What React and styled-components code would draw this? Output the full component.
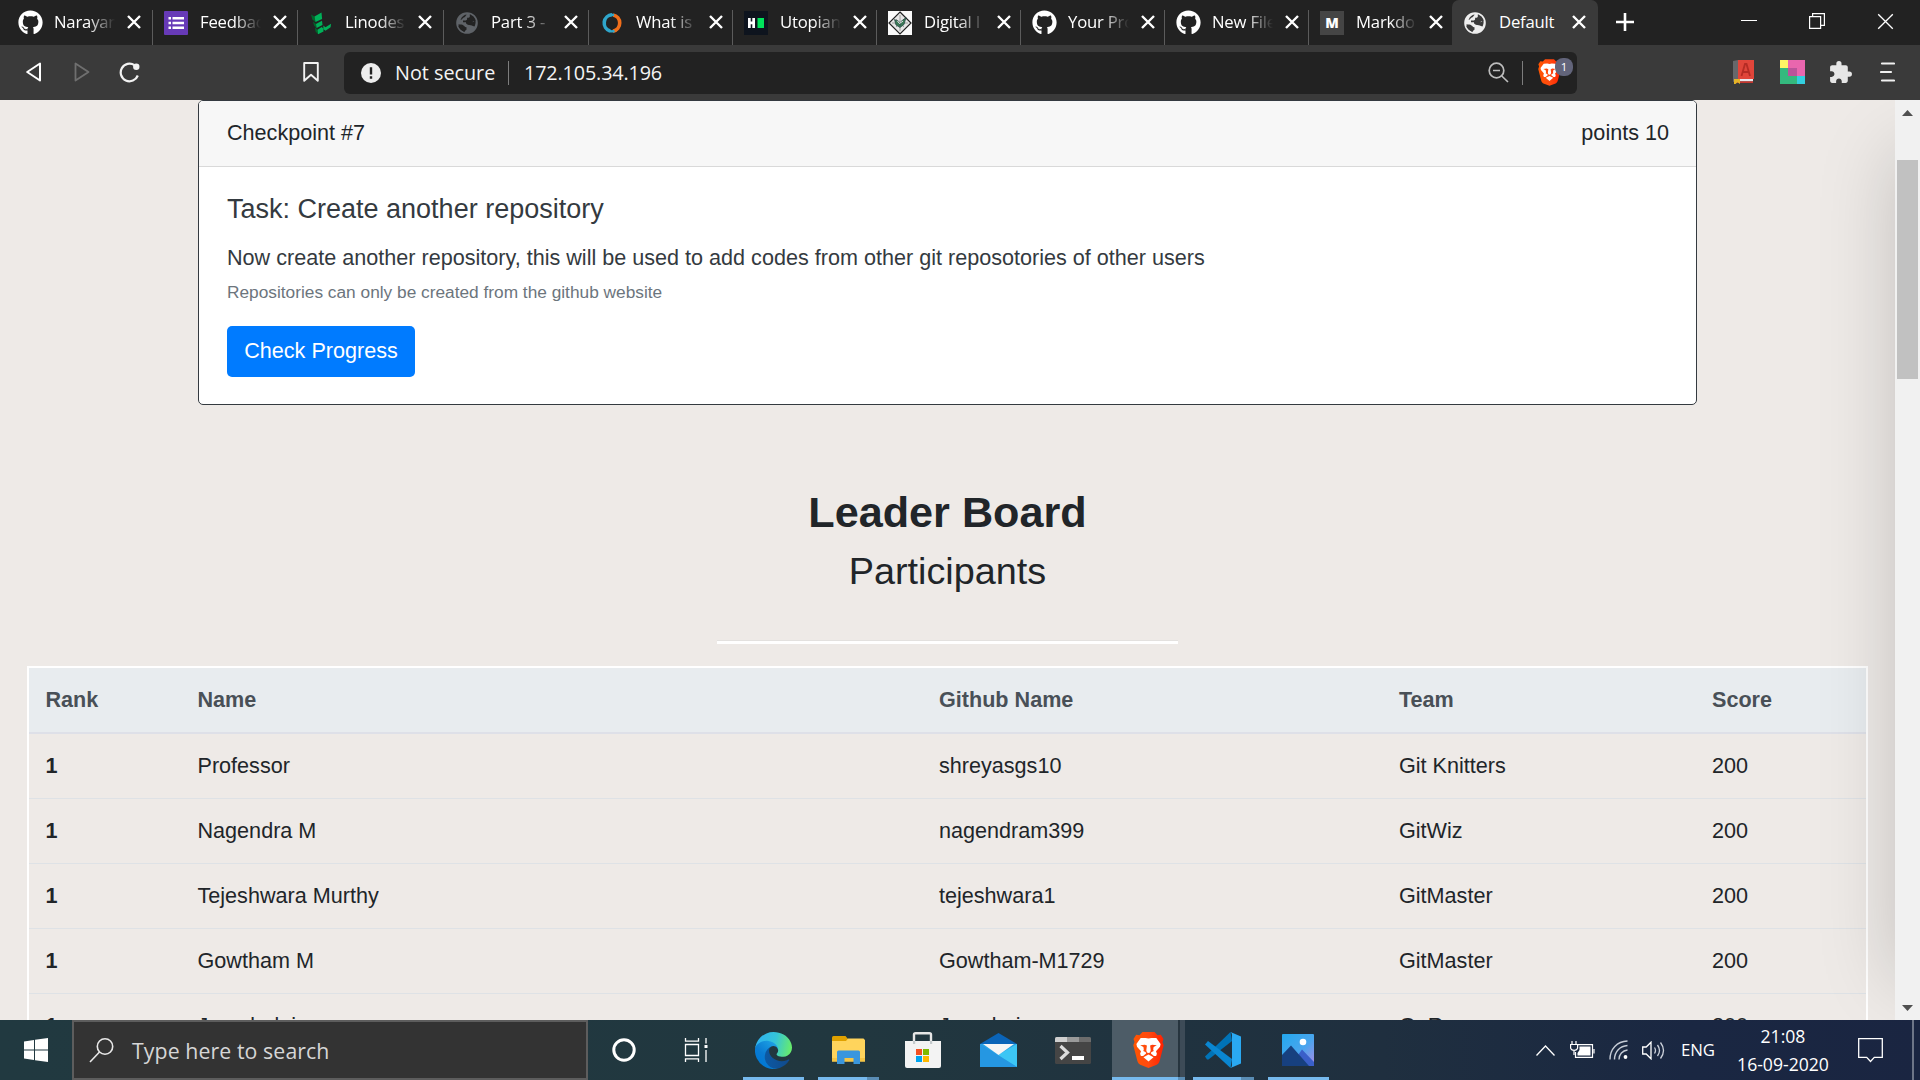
import React from "react";
import styled, { createGlobalStyle, css } from "styled-components";
import { FaGithub } from "react-icons/fa";
import { MdExtension } from "react-icons/md";

const ui = '"Open Sans", "Noto Sans", sans-serif';
const body = '"Liberation Sans", Arial, sans-serif';

const Global = createGlobalStyle`
  html, body { margin: 0; padding: 0; overflow: hidden; background: #222; }
  *, *::before, *::after { box-sizing: border-box; }
  svg { display: block; flex: none; }
`;

const Desktop = styled.div`
  display: flex;
  flex-direction: column;
  width: 1920px;
  height: 1080px;
  overflow: hidden;
  font-family: ${ui};
`;

/* ---------- tab strip ---------- */
const TabStrip = styled.div`
  display: flex;
  height: 45px;
  padding-left: 7px;
  background: #222222;
  flex: none;
`;

const Tab = styled.div`
  display: flex;
  align-items: center;
  width: ${(p) => p.$w}px;
  height: 45px;
  padding-left: 11px;
  flex: none;
  border-radius: 7px 7px 0 0;
  background: ${(p) => (p.$active ? "#3a3a3a" : "transparent")};
  ${(p) =>
    p.$line &&
    css`
      border-radius: 0;
      background: linear-gradient(#5c5c5c, #5c5c5c) right 0 bottom 0 / 1px 35px no-repeat;
    `}
`;

const Favicon = styled.div`
  display: flex;
  align-items: center;
  justify-content: center;
  width: 24px;
  height: 24px;
  flex: none;
  color: #fff;
`;

const TabTitle = styled.span`
  width: 61px;
  margin-left: 12px;
  padding-bottom: 2px;
  overflow: hidden;
  white-space: nowrap;
  font-size: 16.7px;
  line-height: 26px;
  letter-spacing: -0.2px;
  color: #fff;
  flex: none;
  ${(p) =>
    !p.$full &&
    css`
      mask-image: linear-gradient(90deg, #000 56%, transparent 100%);
    `}
`;

const TabClose = styled.div`
  display: flex;
  width: 14px;
  margin: 0 0 1px 12px;
`;

const NewTab = styled.div`
  display: flex;
  align-items: center;
  justify-content: center;
  width: 53px;
  height: 44px;
`;

const WindowButtons = styled.div`
  display: flex;
  margin-left: auto;
  padding-right: 1px;
  height: 42px;
`;

const WindowButton = styled.div`
  display: flex;
  align-items: center;
  justify-content: center;
  width: 68px;
`;

/* ---------- toolbar ---------- */
const Toolbar = styled.div`
  display: flex;
  align-items: center;
  height: 55px;
  background: #3a3a3a;
  flex: none;
`;

const NavIcons = styled.div`
  display: flex;
  align-items: center;
  width: 344px;
  padding: 0 0 1px 26px;
`;

const NavGap = styled.div`
  width: ${(p) => p.$w}px;
`;

const AddressBar = styled.div`
  display: flex;
  align-items: center;
  width: 1233px;
  height: 42px;
  padding: 0 3px 0 17px;
  border-radius: 6px;
  background: #222222;
  color: #f4f4f4;
  font-size: 19.8px;
  line-height: 28px;
  white-space: nowrap;
`;

const Security = styled.span`
  width: 101px;
  margin-left: 14px;
`;

const Address = styled.span`
  width: 138px;
  margin-right: auto;
  letter-spacing: -0.14px;
`;

const BarDivider = styled.span`
  width: 1px;
  height: 24px;
  margin: 0 ${(p) => p.$r}px 0 ${(p) => p.$l}px;
  background: #7d7d7d;
`;

const Shield = styled.div`
  position: relative;
  display: flex;
  width: 36px;
  height: 30px;
  align-items: center;
`;

const ShieldCount = styled.span`
  position: absolute;
  left: 17px;
  top: 0;
  width: 18px;
  height: 18px;
  border-radius: 8px;
  background: #62647a;
  color: #fff;
  font-size: 11.5px;
  line-height: 18px;
  text-align: center;
`;

const Extensions = styled.div`
  display: flex;
  align-items: center;
  margin-left: auto;
  padding: 0 25px 1px 0;
`;

/* ---------- web page ---------- */
const Viewport = styled.div`
  display: flex;
  height: 920px;
  overflow: hidden;
  flex: none;
`;

const Page = styled.main`
  position: relative;
  width: 1895px;
  height: 920px;
  overflow: hidden;
  background: #eeeae7;
  color: #212529;
  font-family: ${body};
  font-size: 21.6px;
  line-height: 33px;
`;

const EdgeShadow = styled.div`
  position: absolute;
  left: 1895px;
  top: 50px;
  width: 300px;
  height: 830px;
  box-shadow: 0 0 72px rgba(0, 0, 0, 0.18);
`;

const Card = styled.section`
  width: 1499px;
  height: 305px;
  margin-left: 198px;
  border: 1px solid #343a40;
  border-radius: 5px;
  background: #fff;
  overflow: hidden;
`;

const CardHeader = styled.header`
  display: flex;
  justify-content: space-between;
  height: 66px;
  padding: 15px 27px 0 28px;
  background: #f7f7f7;
  border-bottom: 1px solid #d9d9d9;
`;

const CardBody = styled.div`
  padding: 26px 28px 0;
  color: #343a40;
`;

const TaskTitle = styled.h5`
  margin: 0 0 15px;
  font-size: 27px;
  font-weight: 400;
  line-height: 33px;
`;

const TaskText = styled.p`
  margin: 0 0 5px;
`;

const TaskNote = styled.p`
  margin: 0 0 21px;
  font-size: 17.3px;
  line-height: 26px;
  color: #6c757d;
`;

const PrimaryButton = styled.button`
  display: block;
  width: 188px;
  height: 51px;
  padding: 0 0 1px;
  border: 0;
  border-radius: 5px;
  background: #007bff;
  color: #fff;
  font: 21.6px ${body};
  white-space: nowrap;
`;

const BoardTitle = styled.h2`
  margin: 81px 0 9px;
  font-size: 43.2px;
  line-height: 53px;
  text-align: center;
`;

const BoardSubtitle = styled.h3`
  margin: 0;
  font-size: 37.8px;
  font-weight: 400;
  line-height: 46px;
  text-align: center;
`;

const Rule = styled.hr`
  width: 461px;
  height: 4px;
  margin: 46px auto 22px;
  border: 0;
  border-top: 1px solid #e3e1df;
  background: #fff;
`;

const Board = styled.div`
  width: 1841px;
  margin-left: 27px;
  border: 2px solid #fff;
`;

const BoardRow = styled.div`
  display: grid;
  grid-template-columns: 152px 741.5px 460px 313px 1fr;
  align-items: center;
  height: 65px;
  padding: 0 0 2px 16.5px;
  border-bottom: 1px solid #dee2e6;
`;

const BoardHead = styled(BoardRow)`
  height: 66px;
  margin: 0 -2px;
  padding-bottom: 4px;
  border-left: 2px solid #fff;
  border-right: 2px solid #fff;
  border-bottom: 0;
  background: linear-gradient(#dee0e8, #dee0e8) left bottom / 100% 2px no-repeat border-box, #e8ecef;
  color: #495057;
  font-weight: 700;
`;

const Rank = styled.b`
  font-weight: 700;
`;

const Scrollbar = styled.div`
  display: flex;
  flex-direction: column;
  align-items: center;
  width: 25px;
  height: 920px;
  padding: 10px 0 9px;
  background: #f1f1f1;
`;

const Thumb = styled.div`
  width: 21px;
  height: 219px;
  margin: 44px 0 auto;
  background: #c1c1c1;
`;

/* ---------- taskbar ---------- */
const Taskbar = styled.footer`
  display: flex;
  height: 60px;
  background: linear-gradient(90deg, #213940 0%, #21373f 45%, #1f2f3f 72%, #1a2742 88%, #1a2541 100%);
  flex: none;
`;

const StartButton = styled.div`
  display: flex;
  align-items: center;
  justify-content: center;
  width: 72px;
`;

const SearchBox = styled.div`
  display: flex;
  align-items: center;
  width: 516px;
  padding-left: 15px;
  gap: 18px;
  border: 2px solid #5d5d5d;
  background: #333333;
  color: #d6d6d6;
  font-size: 21.3px;
  line-height: 30px;
`;

const SearchHint = styled.span`
  padding-top: 2px;
  letter-spacing: 0.08px;
`;

const TaskItem = styled.div`
  display: flex;
  align-items: center;
  justify-content: center;
  position: relative;
  width: ${(p) => p.$w || 75}px;
  padding-right: ${(p) => p.$shift || 0}px;
  flex: none;
`;

const RunMark = styled.span`
  position: absolute;
  bottom: 0;
  left: ${(p) => p.$x}px;
  width: ${(p) => p.$w}px;
  height: 3px;
  background: ${(p) => (p.$dim ? "#5a8db5" : "#76b9ed")};
`;

const ActiveItem = styled(TaskItem)`
  background: linear-gradient(90deg, #4d5c67 66px, #27353f 66px, #27353f 68px, #3d4b57 68px);
`;

const Tray = styled.div`
  display: flex;
  align-items: center;
  margin-left: auto;
  color: #fff;
  font-size: 16.8px;
  line-height: 22px;
`;

const TrayCell = styled.div`
  display: flex;
  justify-content: center;
  width: ${(p) => p.$w}px;
  padding-right: ${(p) => p.$shift || 0}px;
  letter-spacing: -0.1px;
`;

const Clock = styled.div`
  display: flex;
  flex-direction: column;
  align-items: center;
  width: 116px;
  font-size: 17.6px;
  line-height: 28px;
`;

const PeekEdge = styled.div`
  width: 8px;
  height: 60px;
  border-left: 2px solid #6d7587;
`;

/* ---------- drawings ---------- */
const Cross = ({ size = 14, w = 2.4 }) => (
  <svg width={size} height={size} viewBox="0 0 14 14" stroke="#fff" strokeWidth={w}>
    <path d="M1 1 13 13M13 1 1 13" />
  </svg>
);

const Globe = ({ color, gap }) => (
  <svg width="24" height="24" viewBox="0 0 24 24">
    <circle cx="12" cy="12" r="10" fill="none" stroke={color} strokeWidth="1.6" />
    <path
      fill={color}
      d="M12 2c-5.500 0-10 4.500-10 10 0 1 .2 2 .4 2.800H7c1 0 1.500.5 1.500 1.500h2V19H9l.5 2.800c.8.2 1.600.2 2.500.2 5.500 0 10-4.500 10-10 0-.7 0-1.300-.2-2h-2.600c-1 0-1.700.8-1.700 1.800 0 .9-.7 1.400-1.500 1.400h-2.800c-1.300 0-2.200-1-2.200-2H8V9.500h2.800c.8 0 1.300-.6 1.300-1.400V6.800h1.500c.7 0 1.200-.6 1.200-1.200V2.400C14 2.100 13 2 12 2z"
    />
    <path
      fill={gap}
      d="M3.500 13.300c2 .2 3.700.2 5 1.200 1.200.8 1.500 1.800 3 1.800v2.400c-.8.400-1.500 1-1.600 2.100C6.300 20 3.600 17 3.500 13.300zM11 9.800h3c1.500 0 1.800 1.400 3.200 1.400 1.500 0 1.500-1.400 3.300-1.400.4 2-.2 4.400-1 5.700-2.500-.4-3-1.500-5.200-1.500-2 0-3.600-1.200-3.300-4.200zM13 3.500c-2.500 0-2 2.500-4.200 3-1.400.4-1.300 2-3.300 2.400C7 5.200 9.500 3.200 13 3.500z"
    />
  </svg>
);

const Forms = () => (
  <svg width="24" height="24" viewBox="0 0 24 24">
    <rect width="24" height="24" rx="1" fill="#673ab7" />
    <path fill="#fff" d="M4.500 6h2.500v2.600H4.500zM8.500 6H20v2.600H8.500zM4.500 10.700h2.500v2.600H4.500zM8.500 10.700H20v2.600H8.500zM4.500 15.400h2.500V18H4.500zM8.500 15.400H20V18H8.500z" />
  </svg>
);

const Linode = () => (
  <svg width="24" height="24" viewBox="0 0 24 24">
    <path fill="#00662a" d="M2 3.500 5.500 5.500 6.500 11 3.300 8.500zM4 10.500l3 2.500.6 4L5 14.500zM6 16.500l2.500 2.200.6 4.600L6.500 20.500z" />
    <path fill="#00b159" d="m5.500 5.500 7-4 .6 6.500L6.500 11zM7 13l6-3.200.5 4.200-5.900 3zM8.500 18.700l4.200-2.600 1.600 1.500.2 2.800-5.400 2.900zM14.300 14.500l2.200 1.800v3.400l-2-1.500zM16.500 16.300l5.500-3.600-.4 3.600-5.100 3.400z" />
  </svg>
);

const Ring = () => (
  <svg width="24" height="24" viewBox="0 0 24 24" fill="none" strokeWidth="3.600">
    <path stroke="#2fa6cb" d="M12 3.800a8.300 8.300 0 0 0-2 16.200" />
    <path stroke="#f26f1b" d="M13 3.900A8.300 8.300 0 0 1 13 20.200" />
    <path stroke="#2fa6cb" d="M8.500 19.400c2 1.200 4.200 1.200 6 .4M9 4.500c1.500-.8 3.500-.8 5-.3" strokeWidth="2.400" />
  </svg>
);

const HashTile = () => (
  <svg width="24" height="24" viewBox="0 0 24 24">
    <rect width="24" height="24" fill="#0e141e" />
    <path fill="#fff" d="M4 7h2.700v3.600h1.600V7H11v10H8.300v-3.800H6.700V17H4z" />
    <rect x="13.500" y="7" width="6.500" height="10" fill="#00e35b" />
  </svg>
);

const Diamond = () => (
  <svg width="24" height="24" viewBox="0 0 24 24">
    <rect width="24" height="24" fill="#fafafa" />
    <path d="M12 1 23 12 12 23 1 12z" fill="#e6e6e6" stroke="#222" strokeWidth="1.200" />
    <path d="M12 4v16M4 12h16M8 8l8 8M16 8l-8 8" stroke="#8d8d8d" strokeWidth=".8" />
    <path d="M6.500 8.500 11 10.500l1 4 1-4 5-4-2 7-4 3-4-2.500z" fill="#3c7a57" stroke="#244" strokeWidth=".7" />
    <path d="m9.500 10 2 2.500L15 10" stroke="#eee" fill="none" />
  </svg>
);

const MarkBadge = styled.div`
  width: 24px;
  height: 24px;
  background: #454545;
  color: #fff;
  font: 800 14px/24px "Open Sans", sans-serif;
  text-align: center;
`;

const BraveLion = ({ w, h }) => (
  <svg width={w} height={h} viewBox="0 0 31 36">
    <defs>
      <linearGradient id="lionFill" x1="0" x2="1">
        <stop offset="0" stopColor="#ff5500" />
        <stop offset=".5" stopColor="#ff4a10" />
        <stop offset="1" stopColor="#ff2000" />
      </linearGradient>
    </defs>
    <path fill="url(#lionFill)" d="M9.500 0h12l3 3.300 3.300-.5L30.500 7l-1 3 1.200 3.200-4 15.500c-.5 2-1.500 3-3 4L15.500 36l-8.200-3.300c-1.500-1-2.500-2-3-4L.3 13.200 1.500 10l-1-3 2.700-4.200 3.300.5z" />
    <path
      fill="#fff"
      d="m15.500 6.600 3-.7 4.800.2 4.300 6-.6 2.600-4 4.600.9 2.500-.8 2.200-2.200.1-3-2.500.3-1.300 2.500-1.400-.5-1.400.4-2.400 3.200-1.900-4.600-.5-2.100.9.600 4.600-.6 2.200-1.600.6-1.600-.6-.6-2.200.6-4.600-2.100-.9-4.600.5 3.200 1.900.4 2.400-.5 1.400 2.500 1.400.3 1.300-3 2.500-2.200-.1-.8-2.200.9-2.500-4-4.600-.6-2.600 4.300-6 4.800-.2z"
    />
    <path fill="#fff" d="m15.500 22.600 5 2.600-5 4.400-5-4.400z" />
  </svg>
);

const Book = () => (
  <svg width="21" height="24" viewBox="0 0 21 24">
    <path d="M5 0h16v19H5z" fill="#e0453a" />
    <path d="M0 1 5 0v20L0 22z" fill="#66686b" />
    <path d="M4 19h16v2.500H4z" fill="#e9e9ef" />
    <path d="M4 21.300h16V23H4z" fill="#c5362e" />
    <path d="m8.500 16 3.500-12h1.500L17 16M10 12h6" fill="none" stroke="#b52c25" strokeWidth="1.800" />
    <path d="M1 19h6v5l-2.500-1.800L2.500 24H1z" fill="#e4b428" />
  </svg>
);

const Swatches = () => (
  <svg width="25" height="24" viewBox="0 0 25 24">
    <path fill="#fff566" d="M0 0h8v8H0z" />
    <path fill="#e966ae" d="M8 0h17v16H8z" />
    <path fill="#34b97e" d="M0 8h8v8h9v8H0z" />
    <path fill="#bb539a" d="M8 8h9v8H8z" />
    <path fill="#33cfdf" d="M17 16h8v8h-8z" />
  </svg>
);

const Arrow = ({ up }) => (
  <svg width="11" height="6" viewBox="0 0 11 6">
    <path fill="#505050" d={up ? "M5.500 0 11 6H0z" : "M5.500 6 11 0H0z"} />
  </svg>
);

const WindowsLogo = () => (
  <svg width="24" height="24" viewBox="0 0 24 24" fill="#fff">
    <path d="M0 3.400 10 2v9.500H0zM11 1.800 24 0v11.500H11zM0 12.500h10V22L0 20.600zM11 12.500h13V24l-13-1.800z" />
  </svg>
);

const SearchGlass = () => (
  <svg width="25" height="25" viewBox="0 0 25 25" fill="none" stroke="#e8e8e8" strokeWidth="1.600">
    <circle cx="16" cy="8.500" r="7.700" />
    <path d="M10.500 14 1 24" />
  </svg>
);

const TaskView = () => (
  <svg width="24" height="24" viewBox="0 0 24 24" fill="none" stroke="#fff" strokeWidth="1.300">
    <path d="M1.500 6.500h13v11h-13zM1.500 0v3.200h13V0M1.500 24v-3.200h13V24M22 0v5.500M22 12v12" />
    <path d="M20.500 7h3v3h-3z" fill="#fff" stroke="none" />
  </svg>
);

const Edge = () => (
  <svg width="37" height="37" viewBox="0 0 256 256">
    <defs>
      <linearGradient id="ea" x1="63" x2="242" y1="177" y2="177" gradientUnits="userSpaceOnUse">
        <stop offset="0" stopColor="#0c59a4" />
        <stop offset="1" stopColor="#114a8b" />
      </linearGradient>
      <linearGradient id="eb" x1="157" x2="46" y1="108" y2="232" gradientUnits="userSpaceOnUse">
        <stop offset="0" stopColor="#1b9de2" />
        <stop offset=".6" stopColor="#0a7bd2" />
        <stop offset="1" stopColor="#0078d4" />
      </linearGradient>
      <linearGradient id="ec" x1="20" x2="245" y1="70" y2="120" gradientUnits="userSpaceOnUse">
        <stop offset="0" stopColor="#2fb5ee" />
        <stop offset=".5" stopColor="#35c4d8" />
        <stop offset="1" stopColor="#66eb6e" />
      </linearGradient>
    </defs>
    <path fill="url(#ea)" d="M231 190.500c-3.400 1.800-6.900 3.400-10.500 4.700a101 101 0 0 1-35.500 6.400c-47 0-87.800-32.300-87.800-73.700a31 31 0 0 1 16.300-27.100c-42.500 1.800-53.400 46-53.400 72 0 73.300 67.600 80.800 82.200 80.800 7.800 0 19.700-2.300 26.800-4.600l1.300-.4a128 128 0 0 0 66.600-52.800 4 4 0 0 0-6-5.300z" />
    <path fill="url(#eb)" d="M105.700 241.400a79 79 0 0 1-22.700-21.300 80.700 80.700 0 0 1 29.500-120c3-1.400 8.300-4.100 15.400-4 10 .1 19.500 5 25.400 13a32 32 0 0 1 6.300 18.700c0-.2 24.500-79.600-80-79.600-43.900 0-80 41.700-80 78.200a130 130 0 0 0 12.100 56 128 128 0 0 0 156.400 67 75.500 75.500 0 0 1-62.300-8z" />
    <path fill="url(#ec)" d="M152.300 148.900c-.8 1-3.300 2.500-3.300 5.700 0 2.600 1.700 5.100 4.800 7.300 14.300 10 41.500 8.600 41.500 8.600a59 59 0 0 0 30.300-8.300A61.400 61.400 0 0 0 256 109c.2-22.400-8-37.300-11.300-44C223.800 24.200 178.800 0 128 0A128 128 0 0 0 0 126.200c.5-36.500 36.800-66 80-66 3.500 0 23.500.3 42 10 16.400 8.600 25 19 31 29.200 6.100 10.700 7.200 24 7.200 29.500 0 5.300-2.700 13.300-7.900 20z" />
  </svg>
);

const Folder = () => (
  <svg width="33" height="29" viewBox="0 0 33 29">
    <path fill="#e0a100" d="M0 1.500Q0 0 1.500 0h12L16 3v6H0z" />
    <path fill="#ffd45c" d="M0 5h14l2-2.500h15.500L33 4v21.500H0z" />
    <path fill="#f6c544" d="M0 22h33v3.500H0z" />
    <path fill="#3a96dd" d="M5 28V16Q5 14.500 6.500 14.500h20q1.500 0 1.500 1.500v12h-6.500v-6h-9v6z" />
  </svg>
);

const Store = () => (
  <svg width="36" height="36" viewBox="0 0 36 36">
    <path fill="none" stroke="#e6e6e6" strokeWidth="2.400" d="M9 12V2.500Q9 1.200 10.500 1.200h14Q26 1.200 26 2.500V12" />
    <path fill="#f3f3f3" d="M0 9h36v25q0 2-2 2H2q-2 0-2-2z" />
    <path fill="#c4cacc" d="M8 9h2.200v3H8zM25 9h2.200v3H25z" />
    <path fill="#f25022" d="M11 17h6v6h-6z" />
    <path fill="#7fba00" d="M18 17h6v6h-6z" />
    <path fill="#00a4ef" d="M11 24h6v6h-6z" />
    <path fill="#ffb900" d="M18 24h6v6h-6z" />
  </svg>
);

const Mail = () => (
  <svg width="37" height="34" viewBox="0 0 37 34">
    <path fill="#0a64b8" d="M18.500 0 37 11H0z" />
    <path fill="#2aa3e6" d="M0 11h37v23H0z" />
    <path fill="#3cc6f5" d="M37 11v23L18 22z" />
    <path fill="#2597e2" d="M0 34V11l37 23z" />
    <path fill="#f5f5f5" d="M3 11h31L18.500 22z" />
  </svg>
);

const Terminal = () => (
  <svg width="36" height="27" viewBox="0 0 36 27">
    <rect width="36" height="27" rx="1.500" fill="#454545" />
    <path fill="#cfcfcf" d="M0 1.500Q0 0 1.500 0H12v5H0z" />
    <path fill="#9a9a9a" d="M12 0h12v5H12z" />
    <path fill="#6c6c6c" d="M24 0h10.500Q36 0 36 1.500V5H24z" />
    <path fill="none" stroke="#dcdcdc" strokeWidth="3.200" d="m5.500 9 7 6.500-7 6.500" />
    <path fill="#fff" d="M17 19h12v4H17z" />
  </svg>
);

const Code = () => (
  <svg width="37" height="36" viewBox="0 0 37 36">
    <path fill="#0073b7" d="M0 24.500 25.500 0 27 9 3.500 27.500H2z" />
    <path fill="#0a86d1" d="M0 12.500 3 9l24 18-1.500 9z" />
    <path fill="#2aa9f2" d="M25.500 0 36 4.500v27L25.500 36q1.500-1 1.500-3V3q0-2-1.500-3z" />
  </svg>
);

const Photos = () => (
  <svg width="32" height="32" viewBox="0 0 32 32">
    <defs>
      <linearGradient id="sky" x1="0" x2="1" y1="0" y2="1">
        <stop offset="0" stopColor="#22a8ee" />
        <stop offset=".55" stopColor="#4aa5ee" />
        <stop offset="1" stopColor="#a989e6" />
      </linearGradient>
    </defs>
    <rect width="32" height="32" rx="1" fill="url(#sky)" />
    <path fill="#3a5fc9" d="M14 24 20 15.500 32 28v4H14z" />
    <path fill="#17407f" d="M0 21 9 11.500 27 32H0z" />
    <circle cx="21" cy="8" r="3.300" fill="#fff" />
  </svg>
);

const TABS = [
  { title: "Narayan", w: 146, icon: "github" },
  { title: "Feedbac", w: 145, icon: "forms" },
  { title: "Linodes", w: 146, icon: "linode" },
  { title: "Part 3 -", w: 145, icon: "globe" },
  { title: "What is", w: 144, icon: "ring" },
  { title: "Utopian", w: 144, icon: "hash" },
  { title: "Digital I", w: 144, icon: "diamond" },
  { title: "Your Pro", w: 144, icon: "github" },
  { title: "New File", w: 144, icon: "github" },
  { title: "Markdo", w: 143, icon: "mark" },
  { title: "Default", w: 146, icon: "activeGlobe" },
];

const ICONS = {
  github: <FaGithub size={25} />,
  forms: <Forms />,
  linode: <Linode />,
  globe: <Globe color="#5f6368" gap="#222222" />,
  ring: <Ring />,
  hash: <HashTile />,
  diamond: <Diamond />,
  mark: <MarkBadge>M</MarkBadge>,
  activeGlobe: <Globe color="#eeeeee" gap="#3a3a3a" />,
};

const PLAYERS = [
  ["Professor", "shreyasgs10", "Git Knitters"],
  ["Nagendra M", "nagendram399", "GitWiz"],
  ["Tejeshwara Murthy", "tejeshwara1", "GitMaster"],
  ["Gowtham M", "Gowtham-M1729", "GitMaster"],
  ["Jayadedain", "Jayadari", "GoRepo"],
];

export default function App() {
  return (
    <Desktop>
      <Global />
      <TabStrip>
        {TABS.map((t, i) => (
          <Tab key={i} $w={t.w} $active={i === 10} $line={i < 9}>
            <Favicon>{ICONS[t.icon]}</Favicon>
            <TabTitle $full={i === 10}>{t.title}</TabTitle>
            <TabClose>
              <Cross />
            </TabClose>
          </Tab>
        ))}
        <NewTab>
          <svg width="18" height="18" viewBox="0 0 18 18" stroke="#fff" strokeWidth="2.600">
            <path d="M9 0v18M0 9h18" />
          </svg>
        </NewTab>
        <WindowButtons>
          <WindowButton>
            <svg width="16" height="2"><path d="M0 .5h16" stroke="#fff" /></svg>
          </WindowButton>
          <WindowButton>
            <svg width="16" height="16" viewBox="0 0 16 16" fill="none" stroke="#fff" strokeWidth="1.200">
              <path d="M.6 3.600h11v11.800H.6zM3.600 3.600V.6h11.800v11.800h-3.800" />
            </svg>
          </WindowButton>
          <WindowButton>
            <Cross size={17} w={1.1} />
          </WindowButton>
        </WindowButtons>
      </TabStrip>

      <Toolbar>
        <NavIcons>
          <svg width="16" height="20" viewBox="0 0 16 20" fill="none" stroke="#fff" strokeWidth="2" strokeLinejoin="round">
            <path d="M14 1.500v17L1.200 10z" />
          </svg>
          <NavGap $w={32} />
          <svg width="16" height="20" viewBox="0 0 16 20" fill="none" stroke="#6f6f6f" strokeWidth="1.800" strokeLinejoin="round">
            <path d="M1.500 1.500v17L14.500 10z" />
          </svg>
          <NavGap $w={29} />
          <svg width="22" height="21" viewBox="0 0 22 21" fill="none" stroke="#f2f2f2" strokeWidth="2.200">
            <path d="M15.500 3.200A8.800 8.800 0 1 0 18.800 13.500" />
            <circle cx="17.300" cy="4.800" r="3.200" fill="#f2f2f2" stroke="none" />
          </svg>
          <NavGap $w={162} />
          <svg width="16" height="20" viewBox="0 0 16 20" fill="none" stroke="#f2f2f2" strokeWidth="1.900" strokeLinejoin="round">
            <path d="M1.200 1h13.600v17.800L8 12.800l-6.800 6z" />
          </svg>
        </NavIcons>
        <AddressBar>
          <svg width="20" height="20" viewBox="0 0 20 20">
            <circle cx="10" cy="10" r="10" fill="#ededed" />
            <path d="M8.800 4.200h2.400v7.300H8.800zM8.800 13.200h2.400v2.500H8.800z" fill="#222" />
          </svg>
          <Security>Not secure</Security>
          <BarDivider $l={12} $r={15} />
          <Address>172.105.34.196</Address>
          <svg width="21" height="21" viewBox="0 0 21 21" fill="none" stroke="#bdbdbd" strokeWidth="1.700">
            <circle cx="8.500" cy="8.500" r="7.300" />
            <path d="M13.800 14 20 20M5 8.500h7" />
          </svg>
          <BarDivider $l={13} $r={15} />
          <Shield>
            <BraveLion w={23} h={27} />
            <ShieldCount>1</ShieldCount>
          </Shield>
        </AddressBar>
        <Extensions>
          <Book />
          <NavGap $w={26} />
          <Swatches />
          <NavGap $w={23} />
          <MdExtension size={25} color="#e6e6e6" />
          <NavGap $w={27} />
          <svg width="15" height="20" viewBox="0 0 15 20" stroke="#f0f0f0" strokeWidth="2.200" strokeLinecap="round">
            <path d="M2 1.500h12M1 10h10M2 18.500h12" />
          </svg>
        </Extensions>
      </Toolbar>

      <Viewport>
        <Page>
          <Card>
            <CardHeader>
              <span>Checkpoint #7</span>
              <span>points 10</span>
            </CardHeader>
            <CardBody>
              <TaskTitle>Task: Create another repository</TaskTitle>
              <TaskText>
                Now create another repository, this will be used to add codes from other git reposotories of other users
              </TaskText>
              <TaskNote>Repositories can only be created from the github website</TaskNote>
              <PrimaryButton>Check Progress</PrimaryButton>
            </CardBody>
          </Card>
          <BoardTitle>Leader Board</BoardTitle>
          <BoardSubtitle>Participants</BoardSubtitle>
          <Rule />
          <Board>
            <BoardHead>
              <span>Rank</span>
              <span>Name</span>
              <span>Github Name</span>
              <span>Team</span>
              <span>Score</span>
            </BoardHead>
            {PLAYERS.map(([name, git, team]) => (
              <BoardRow key={name}>
                <Rank>1</Rank>
                <span>{name}</span>
                <span>{git}</span>
                <span>{team}</span>
                <span>200</span>
              </BoardRow>
            ))}
          </Board>
          <EdgeShadow />
        </Page>
        <Scrollbar>
          <Arrow up />
          <Thumb />
          <Arrow />
        </Scrollbar>
      </Viewport>

      <Taskbar>
        <StartButton>
          <WindowsLogo />
        </StartButton>
        <SearchBox>
          <SearchGlass />
          <SearchHint>Type here to search</SearchHint>
        </SearchBox>
        <TaskItem $w={72}>
          <svg width="24" height="24" viewBox="0 0 24 24" fill="none" stroke="#fff" strokeWidth="3">
            <circle cx="12" cy="12" r="10.200" />
          </svg>
        </TaskItem>
        <TaskItem $w={73} $shift={2}>
          <TaskView />
        </TaskItem>
        <TaskItem $w={80}>
          <Edge />
          <RunMark $x={10} $w={61} />
        </TaskItem>
        <TaskItem $w={70}>
          <Folder />
          <RunMark $x={5} $w={49} />
          <RunMark $x={54} $w={12} $dim />
        </TaskItem>
        <TaskItem $w={79}>
          <Store />
        </TaskItem>
        <TaskItem $w={72}>
          <Mail />
        </TaskItem>
        <TaskItem $w={78}>
          <Terminal />
        </TaskItem>
        <ActiveItem $w={73} $shift={1}>
          <BraveLion w={31} h={36} />
          <RunMark $x={0} $w={66} />
          <RunMark $x={66} $w={7} $dim />
        </ActiveItem>
        <TaskItem $w={76}>
          <Code />
          <RunMark $x={8} $w={48} />
          <RunMark $x={56} $w={13} $dim />
        </TaskItem>
        <TaskItem $w={75} $shift={2}>
          <Photos />
          <RunMark $x={7} $w={61} />
        </TaskItem>
        <Tray>
          <TrayCell $w={36} $shift={3}>
            <svg width="19" height="11" viewBox="0 0 19 11" fill="none" stroke="#fff" strokeWidth="1.300">
              <path d="M.5 10.500 9.500 1l9 9.500" />
            </svg>
          </TrayCell>
          <TrayCell $w={36} $shift={2}>
            <svg width="25" height="19" viewBox="0 0 25 19" fill="none" stroke="#fff" strokeWidth="1.200">
              <path d="M8 3.600h14.500v12.800H5.500V11M24 8v4.500" />
              <path d="M9.500 5.500h11v9h-13V12L9.500 9z" fill="#fff" stroke="none" />
              <path d="M.6 3.500h7v3.700Q7 9.300 4.100 9.300T.6 7.200zM2 0v3.500M6 0v3.500M4 9.300V14" />
            </svg>
          </TrayCell>
          <TrayCell $w={34}>
            <svg width="19" height="20" viewBox="0 0 19 20" fill="none" stroke="#c6ccd6" strokeWidth="1.400">
              <path d="M1 19.500C1 9 8 1.500 18.500 1M5.500 19.500C5.500 11.500 11 6 18.500 5.500M10 19.500c0-5 3.500-9 8.500-9.500" />
              <circle cx="16.500" cy="17" r="1.900" fill="#fff" stroke="none" />
            </svg>
          </TrayCell>
          <TrayCell $w={36}>
            <svg width="23" height="19" viewBox="0 0 23 19" fill="none" stroke="#fff" strokeWidth="1.300">
              <path d="M.7 6h3.500L9 1.200v16.600L4.200 13H.7z" />
              <path d="M12.500 6.500q2 3 0 6M15.500 4q4 5.500 0 11M18.500 1.500q6 8 0 16" stroke="#cdd2db" />
            </svg>
          </TrayCell>
          <TrayCell $w={54}>ENG</TrayCell>
          <Clock>
            <span>21:08</span>
            <span>16-09-2020</span>
          </Clock>
          <TrayCell $w={71} $shift={13}>
            <svg width="25" height="25" viewBox="0 0 25 25" fill="none" stroke="#fff" strokeWidth="1.300">
              <path d="M.7.700h23.600v18.600h-8L12.500 23.500l-3.800-4.200h-8z" />
            </svg>
          </TrayCell>
          <PeekEdge />
        </Tray>
      </Taskbar>
    </Desktop>
  );
}
